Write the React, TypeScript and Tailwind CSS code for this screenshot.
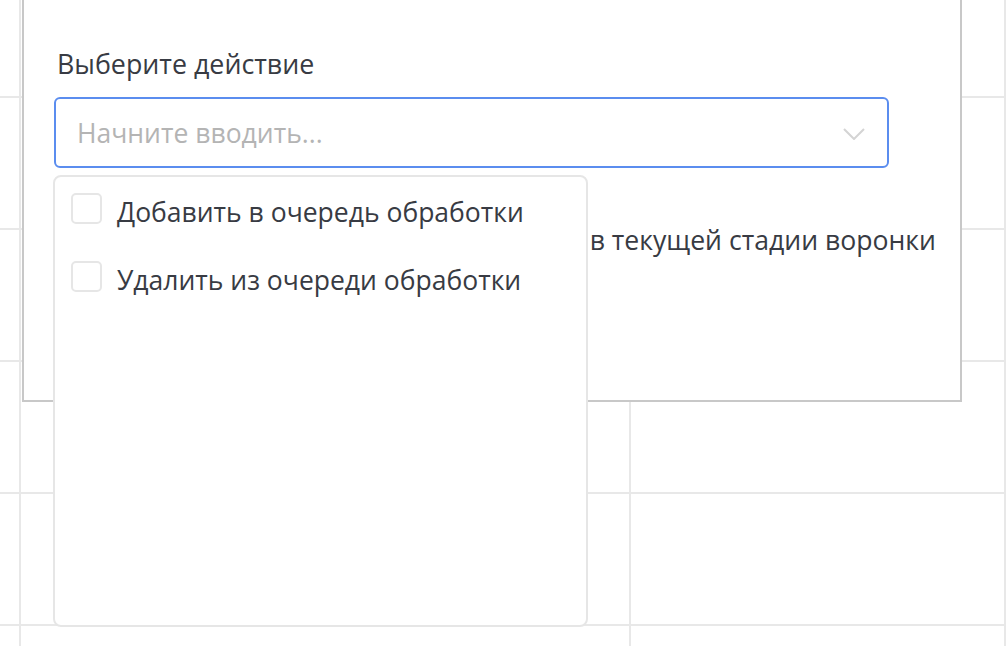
import React, { useState } from "react";

interface ActionOption {
  id: string;
  label: string;
}

const actions: ActionOption[] = [
  { id: "add", label: "Добавить в очередь обработки" },
  { id: "remove", label: "Удалить из очереди обработки" },
];

const font = { fontFamily: '"Open Sans", "Noto Sans", sans-serif' };

// Calendar-like board behind the modal
const BoardGrid: React.FC = () => {
  const cells = Array.from({ length: 18 });
  return (
    <div className="grid grid-cols-[21px_610px_1fr] grid-rows-[98px_132px_132px_132px_132px_132px]">
      {cells.map((_, i) => (
        <div key={i} className="border-r-2 border-b-2 border-[#e8e8e8]" />
      ))}
    </div>
  );
};

const Chevron: React.FC = () => (
  <svg width="22" height="12" viewBox="0 0 22 12" fill="none">
    <path d="M1 1l10 10L21 1" stroke="#d4d4d4" strokeWidth="2" />
  </svg>
);

const App: React.FC = () => {
  const [checked, setChecked] = useState<Record<string, boolean>>({});

  return (
    <div className="relative h-[646px] w-[1006px] overflow-hidden bg-white text-[#383b43]" style={font}>
      <BoardGrid />

      {/* Modal */}
      <div className="absolute left-[22px] top-[-20px] h-[422px] w-[940px] border-2 border-[#c8c8c8] bg-white pl-[30px] pt-[64px]">
        <div className="ml-[3px] text-[26.8px] leading-[36px]">Выберите действие</div>

        <div className="relative mt-[15px] w-[835px]">
          <div className="flex h-[71px] items-center justify-between rounded-[6px] border-2 border-[#5b8def] pl-[21px] pr-[22px] pt-[2px]">
            <span className="text-[26.5px] text-[#b4b4b4]">Начните вводить...</span>
            <Chevron />
          </div>

          {/* Dropdown with options */}
          <div className="absolute left-[-1px] top-[78px] z-10 h-[452px] w-[535px] rounded-[8px] border-2 border-[#e6e6e6] bg-white pl-[16px] pt-[16px]">
            {actions.map((a) => (
              <label key={a.id} className="flex h-[68px] cursor-pointer items-start gap-[15px]">
                <button
                  type="button"
                  onClick={() => setChecked((s) => ({ ...s, [a.id]: !s[a.id] }))}
                  className="h-[31px] w-[31px] shrink-0 rounded-[5px] border-2 border-[#e6e6e6] bg-white"
                />
                <span className="mt-[1px] text-[26.5px] leading-[36px]">{a.label}</span>
              </label>
            ))}
          </div>

          <div className="mt-[54px] flex w-[882px] justify-end text-[26.6px] leading-[36px]">
            Только для сделок в текущей стадии воронки
          </div>
        </div>
      </div>
    </div>
  );
};

export default App;
